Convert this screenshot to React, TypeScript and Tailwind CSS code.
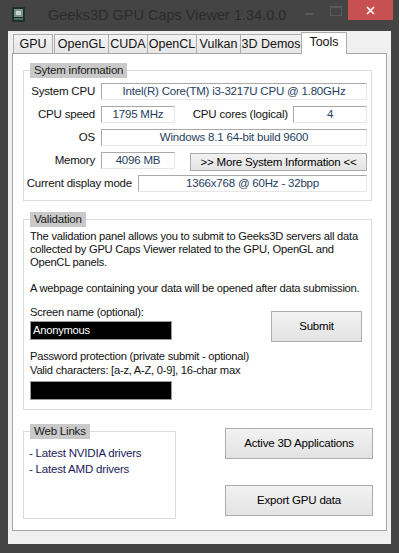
import React from "react";

const tabs = [
  { label: "GPU", w: "w-[40px]" },
  { label: "OpenGL", w: "w-[55px]" },
  { label: "CUDA", w: "w-[40px]" },
  { label: "OpenCL", w: "w-[50px]" },
  { label: "Vulkan", w: "w-[45px]" },
  { label: "3D Demos", w: "w-[62px]" },
];

function Field({ value, className = "" }: { value: string; className?: string }) {
  return (
    <div
      className={`h-[17px] bg-white border-t border-l border-t-[#a9a9a9] border-l-[#a9a9a9] border-r border-b border-r-[#e6e6e6] border-b-[#e6e6e6] text-center text-[11.5px] tracking-[-0.2px] leading-[14px] whitespace-nowrap text-[#1f3d5e] ${className}`}
    >
      {value}
    </div>
  );
}

function WinButton({ children, className = "" }: { children: React.ReactNode; className?: string }) {
  return (
    <button
      className={`bg-gradient-to-b from-[#f2f2f2] to-[#e3e3e3] border border-[#acacac] text-[11.5px] tracking-[-0.2px] whitespace-nowrap text-black ${className}`}
    >
      {children}
    </button>
  );
}

function Legend({ children }: { children: React.ReactNode }) {
  return (
    <legend className="ml-[6px] bg-[#c9c9c9] px-[4px] h-[15px] text-[11.5px] tracking-[-0.2px] leading-[15px] whitespace-nowrap text-[#1a1a1a]">
      {children}
    </legend>
  );
}

export default function App() {
  return (
    <div className="w-[399px] h-[553px] bg-[#444444] flex flex-col font-['Liberation_Sans',Arial,sans-serif] overflow-hidden">
      {/* Title bar */}
      <div className="h-[31px] flex items-start shrink-0">
        <svg className="ml-[12px] mt-[7px]" width="13" height="15" viewBox="0 0 13 15">
          <rect x="0" y="0" width="13" height="15" fill="#1e3328" />
          <rect x="2" y="2" width="9" height="8" fill="#7d9089" />
          <rect x="4" y="4" width="5" height="4" fill="#c9d2cf" />
          <rect x="2" y="11" width="9" height="2" fill="#4d6b5c" />
        </svg>
        <span className="ml-[23px] mt-[5px] text-[14.5px] leading-[20px] text-[#2b2b2b] whitespace-nowrap">
          Geeks3D GPU Caps Viewer 1.34.0.0
        </span>
        <div className="ml-auto flex items-start">
          <div className="mt-[13px] w-[8px] h-[2px] bg-[#5a5a5a]" />
          <div className="ml-[17px] mt-[6px] w-[12px] h-[10px] border border-[#5a5a5a] border-t-2" />
          <div className="ml-[6px] w-[45px] h-[20px] bg-[#c75050] flex items-center justify-center">
            <svg width="9" height="9" viewBox="0 0 9 9">
              <path d="M1 1L8 8M8 1L1 8" stroke="#ffffff" strokeWidth="1.6" />
            </svg>
          </div>
          <div className="w-[6px]" />
        </div>
      </div>

      {/* Client area */}
      <div className="mx-[8px] h-[513px] bg-[#f0f0f0] flex flex-col px-[4px] pt-[1px] shrink-0">
        {/* Tabs */}
        <div className="h-[22px] flex items-end pl-px relative z-10">
          {tabs.map((t, i) => (
            <div
              key={t.label}
              className={`${t.w} h-[19px] mb-px border border-b-0 border-[#acacac] bg-gradient-to-b from-[#f3f3f3] to-[#e6e6e6] text-[12.5px] leading-[18px] text-center whitespace-nowrap text-[#111] ${
                i === 0 ? "mr-[2px]" : "-ml-px"
              }`}
            >
              {t.label}
            </div>
          ))}
          <div className="w-[46px] h-[22px] -ml-px border border-b-0 border-[#acacac] bg-white text-[12.5px] leading-[18px] text-center text-[#111]">
            Tools
          </div>
        </div>

        {/* Panel */}
        <div className="h-[478px] -mt-px bg-white border border-[#a5a5a5] flex flex-col pl-[10px]">
          {/* System information */}
          <fieldset className="mt-[9px] w-[349px] border border-[#dcdcdc] p-0 m-0">
            <Legend>Sytem information</Legend>
            <div className="flex flex-col gap-[6px] pt-[5px] pb-[8px] pr-[4px] text-[11.5px] tracking-[-0.2px] text-[#111] whitespace-nowrap">
              <div className="flex items-center h-[17px]">
                <span className="w-[71px] text-right">System CPU</span>
                <Field value="Intel(R) Core(TM) i3-3217U CPU @ 1.80GHz" className="ml-[6px] flex-1" />
              </div>
              <div className="flex items-center h-[17px]">
                <span className="w-[71px] text-right">CPU speed</span>
                <Field value="1795 MHz" className="ml-[6px] w-[74px]" />
                <span className="w-[113px] text-right">CPU cores (logical)</span>
                <Field value="4" className="ml-[5px] w-[74px]" />
              </div>
              <div className="flex items-center h-[17px]">
                <span className="w-[71px] text-right">OS</span>
                <Field value="Windows 8.1 64-bit build 9600" className="ml-[6px] flex-1" />
              </div>
              <div className="flex items-start h-[17px]">
                <span className="w-[71px] text-right leading-[17px]">Memory</span>
                <Field value="4096 MB" className="ml-[6px] w-[74px]" />
                <WinButton className="ml-[15px] mt-px w-[177px] h-[18px] leading-[16px]">
                  &gt;&gt; More System Information &lt;&lt;
                </WinButton>
              </div>
              <div className="flex items-center h-[17px]">
                <span className="flex-1 text-right">Current display mode</span>
                <Field value="1366x768 @ 60Hz - 32bpp" className="ml-[6px] w-[229px]" />
              </div>
            </div>
          </fieldset>

          {/* Validation */}
          <fieldset className="mt-[11px] w-[349px] border border-[#dcdcdc] p-0 m-0">
            <Legend>Validation</Legend>
            <div className="pl-[6px] pr-[4px] pt-[3px] pb-[9px] text-[11.2px] tracking-[-0.25px] leading-[13px] text-[#111]">
              <p>
                The validation panel allows you to submit to Geeks3D servers all data collected by GPU Caps Viewer
                related to the GPU, OpenGL and OpenCL panels.
              </p>
              <p className="mt-[13px] whitespace-nowrap">
                A webpage containing your data will be opened after data submission.
              </p>
              <div className="flex mt-[11px]">
                <div className="w-[241px] flex flex-col whitespace-nowrap">
                  <span>Screen name (optional):</span>
                  <div className="mt-[2px] w-[142px] h-[19px] bg-black border border-[#9c9c9c] text-white pl-[2px] leading-[17px]">
                    Anonymous
                  </div>
                  <span className="mt-[10px]">Password protection (private submit - optional)</span>
                  <span className="mt-px">Valid characters: [a-z, A-Z, 0-9], 16-char max</span>
                  <div className="mt-[4px] w-[142px] h-[19px] bg-black border border-[#9c9c9c]" />
                </div>
                <WinButton className="mt-[5px] w-[91px] h-[31px]">Submit</WinButton>
              </div>
            </div>
          </fieldset>

          {/* Bottom row */}
          <div className="flex mt-[14px] items-start">
            <fieldset className="w-[153px] h-[95px] border border-[#dcdcdc] p-0 m-0">
              <Legend>Web Links</Legend>
              <div className="pl-[5px] pt-[6px] text-[11.5px] tracking-[-0.2px] leading-[16px] whitespace-nowrap text-[#1b1b5c]">
                <div>- Latest NVIDIA drivers</div>
                <div>- Latest AMD drivers</div>
              </div>
            </fieldset>
            <div className="ml-[49px] mt-[4px] flex flex-col gap-[26px]">
              <WinButton className="w-[148px] h-[31px]">Active 3D Applications</WinButton>
              <WinButton className="w-[148px] h-[31px]">Export GPU data</WinButton>
            </div>
          </div>
        </div>
      </div>
    </div>
  );
}
